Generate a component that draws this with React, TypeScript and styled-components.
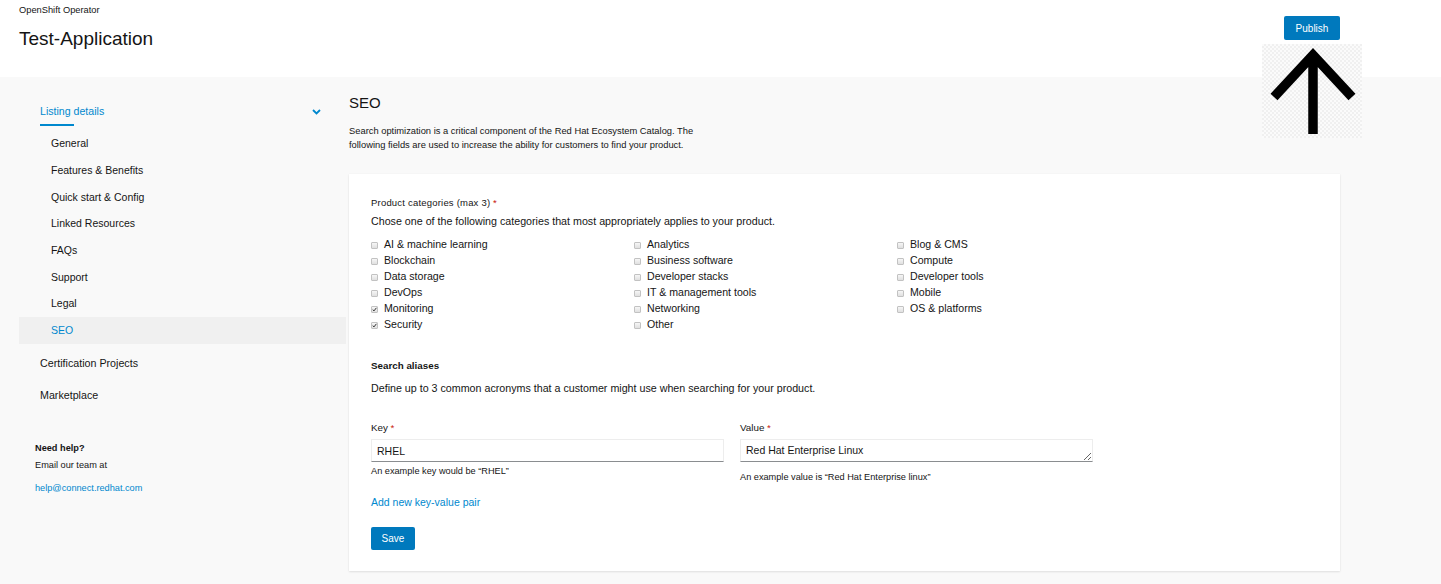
import React from 'react';
import styled, { createGlobalStyle } from 'styled-components';

const GlobalStyle = createGlobalStyle`
  html, body {
    margin: 0;
    padding: 0;
    background: #f9f9f9;
    font-family: "Liberation Sans", Arial, sans-serif;
    color: #151515;
  }
  * { box-sizing: border-box; }
`;

const BLUE = '#0079bd';
const LINK = '#0088ce';

const categories: { label: string; checked?: boolean }[][] = [
  [
    { label: 'AI & machine learning' },
    { label: 'Blockchain' },
    { label: 'Data storage' },
    { label: 'DevOps' },
    { label: 'Monitoring', checked: true },
    { label: 'Security', checked: true },
  ],
  [
    { label: 'Analytics' },
    { label: 'Business software' },
    { label: 'Developer stacks' },
    { label: 'IT & management tools' },
    { label: 'Networking' },
    { label: 'Other' },
  ],
  [
    { label: 'Blog & CMS' },
    { label: 'Compute' },
    { label: 'Developer tools' },
    { label: 'Mobile' },
    { label: 'OS & platforms' },
  ],
];

const subNav = [
  'General',
  'Features & Benefits',
  'Quick start & Config',
  'Linked Resources',
  'FAQs',
  'Support',
  'Legal',
  'SEO',
];

export default function App() {
  return (
    <>
      <GlobalStyle />
      <Page>
        <Header>
          <TitleBlock>
            <Overline>OpenShift Operator</Overline>
            <PageTitle>Test-Application</PageTitle>
          </TitleBlock>
          <Actions>
            <PrimaryButton>Publish</PrimaryButton>
            <ArrowImage>
              <svg width="100" height="94" viewBox="0 0 100 94">
                <path
                  d="M51 10 L51 90 M12 53 L51 11 L90 53"
                  stroke="#000"
                  strokeWidth="9.5"
                  fill="none"
                  strokeLinecap="butt"
                  strokeLinejoin="miter"
                />
              </svg>
            </ArrowImage>
          </Actions>
        </Header>
        <Body>
          <Sidebar>
            <NavGroup>
              <GroupHead>
                <GroupTitle>Listing details</GroupTitle>
                <svg width="9" height="6" viewBox="0 0 9 6">
                  <path d="M1 1 L4.5 4.5 L8 1" stroke={LINK} strokeWidth="1.8" fill="none" />
                </svg>
              </GroupHead>
              <SubList>
                {subNav.map((item) => (
                  <SubItem key={item} active={item === 'SEO'}>
                    {item}
                  </SubItem>
                ))}
              </SubList>
            </NavGroup>
            <TopItem>Certification Projects</TopItem>
            <TopItem>Marketplace</TopItem>
            <Help>
              <HelpTitle>Need help?</HelpTitle>
              <HelpText>Email our team at</HelpText>
              <HelpLink>help@connect.redhat.com</HelpLink>
            </Help>
          </Sidebar>
          <Main>
            <SectionTitle>SEO</SectionTitle>
            <Intro>
              Search optimization is a critical component of the Red Hat Ecosystem Catalog. The
              <br />
              following fields are used to increase the ability for customers to find your product.
            </Intro>
            <Card>
              <FieldLabel>
                Product categories (max 3) <Req>*</Req>
              </FieldLabel>
              <FieldDesc gap={4}>
                Chose one of the following categories that most appropriately applies to your product.
              </FieldDesc>
              <CheckGrid>
                {categories.map((col, i) => (
                  <CheckColumn key={i}>
                    {col.map((c) => (
                      <CheckRow key={c.label}>
                        <Box checked={c.checked}>
                          {c.checked && (
                            <svg width="5" height="5" viewBox="0 0 5 5">
                              <path d="M0.7 2.6 L2 3.9 L4.4 0.8" stroke="#333" strokeWidth="1" fill="none" />
                            </svg>
                          )}
                        </Box>
                        {c.label}
                      </CheckRow>
                    ))}
                  </CheckColumn>
                ))}
              </CheckGrid>

              <SubHeading>Search aliases</SubHeading>
              <FieldDesc gap={8}>
                Define up to 3 common acronyms that a customer might use when searching for your product.
              </FieldDesc>

              <PairRow>
                <Field>
                  <SmallLabel>
                    Key <Req>*</Req>
                  </SmallLabel>
                  <TextInput defaultValue="RHEL" />
                  <Helper>An example key would be “RHEL”</Helper>
                </Field>
                <Field>
                  <SmallLabel>
                    Value <Req>*</Req>
                  </SmallLabel>
                  <TextArea defaultValue="Red Hat Enterprise Linux" rows={1} />
                  <Helper offset={6}>An example value is “Red Hat Enterprise linux”</Helper>
                </Field>
              </PairRow>

              <AddLink>Add new key-value pair</AddLink>
              <SaveButton>Save</SaveButton>
            </Card>
          </Main>
        </Body>
      </Page>
    </>
  );
}

const Page = styled.div`
  min-height: 584px;
  background: #f9f9f9;
`;

const Header = styled.header`
  height: 77px;
  background: #fff;
  display: flex;
  justify-content: space-between;
  padding: 0 101px 0 19px;
  position: relative;
  z-index: 1;
`;

const TitleBlock = styled.div`
  display: flex;
  flex-direction: column;
  padding-top: 4px;
`;

const Overline = styled.div`
  font-size: 9.3px;
  line-height: 12px;
  color: #151515;
`;

const PageTitle = styled.h1`
  margin: 12px 0 0;
  font-size: 19px;
  line-height: 22px;
  font-weight: 400;
  color: #151515;
`;

const Actions = styled.div`
  position: relative;
  padding-top: 16px;
`;

const PrimaryButton = styled.button`
  height: 24px;
  width: 56px;
  padding: 0;
  border: none;
  border-radius: 2px;
  background: ${BLUE};
  color: #fff;
  font-family: inherit;
  font-size: 10px;
`;

const ArrowImage = styled.div`
  position: absolute;
  top: 44px;
  left: -22px;
  width: 100px;
  height: 94px;
  background-color: #fbfbfb;
  background-image: repeating-conic-gradient(#f0f0f0 0% 25%, #fbfbfb 0% 50%);
  background-size: 4px 4px;
  svg { display: block; }
`;

const Body = styled.div`
  display: flex;
  padding: 0 101px 13px 19px;
`;

const Sidebar = styled.aside`
  width: 327px;
  flex-shrink: 0;
  margin-right: 3px;
  padding-top: 25px;
`;

const NavGroup = styled.div`
  margin-bottom: 3px;
`;

const GroupHead = styled.div`
  display: flex;
  align-items: center;
  justify-content: space-between;
  padding: 0 25px 0 21px;
  height: 19px;
`;

const GroupTitle = styled.span`
  font-size: 10.6px;
  color: ${LINK};
  line-height: 19px;
  position: relative;
  &::after {
    content: '';
    position: absolute;
    left: 0;
    bottom: -5px;
    width: 34px;
    height: 2px;
    background: ${LINK};
  }
`;

const SubList = styled.div`
  margin-top: 9px;
`;

const SubItem = styled.div<{ active?: boolean }>`
  height: 26.7px;
  display: flex;
  align-items: center;
  padding-left: 32px;
  font-size: 10.5px;
  color: ${(p) => (p.active ? LINK : '#151515')};
  background: ${(p) => (p.active ? '#f0f0f0' : 'transparent')};
`;

const TopItem = styled.div`
  height: 32px;
  display: flex;
  align-items: center;
  padding-left: 21px;
  font-size: 10.7px;
  color: #151515;
`;

const Help = styled.div`
  margin-top: 30px;
  padding-left: 16px;
  font-size: 9.2px;
`;

const HelpTitle = styled.div`
  font-weight: 700;
  line-height: 14px;
  color: #151515;
`;

const HelpText = styled.div`
  line-height: 20px;
  color: #151515;
`;

const HelpLink = styled.div`
  margin-top: 6px;
  line-height: 14px;
  color: ${LINK};
`;

const Main = styled.main`
  flex: 1;
  padding-top: 17px;
`;

const SectionTitle = styled.h2`
  margin: 0;
  font-size: 15px;
  line-height: 18px;
  font-weight: 400;
  color: #151515;
`;

const Intro = styled.p`
  margin: 12px 0 0;
  font-size: 9.35px;
  line-height: 14px;
  color: #151515;
`;

const Card = styled.section`
  margin-top: 22px;
  background: #fff;
  box-shadow: 0 1px 2px rgba(3, 3, 3, 0.1), 0 0 1px rgba(3, 3, 3, 0.06);
  padding: 22px 22px 21px;
  min-height: 397px;
`;

const FieldLabel = styled.div`
  font-size: 9.5px;
  letter-spacing: 0.2px;
  line-height: 14px;
  color: #151515;
`;

const Req = styled.span`
  color: #c9190b;
`;

const FieldDesc = styled.div<{ gap: number }>`
  margin-top: ${(p) => p.gap}px;
  font-size: 10.7px;
  line-height: 14px;
  color: #151515;
`;

const CheckGrid = styled.div`
  margin-top: 8px;
  display: grid;
  grid-template-columns: 263px 263px 263px;
`;

const CheckColumn = styled.div`
  display: flex;
  flex-direction: column;
`;

const CheckRow = styled.label`
  height: 16px;
  display: flex;
  align-items: center;
  font-size: 10.6px;
  color: #151515;
`;

const Box = styled.span<{ checked?: boolean }>`
  width: 7px;
  height: 7px;
  margin: 2px 6px 0 0;
  border: 1px solid #c2c2c2;
  border-radius: 1px;
  background: linear-gradient(#f6f6f6, #e0e0e0);
  display: inline-flex;
  align-items: center;
  justify-content: center;
  flex-shrink: 0;
  svg { display: block; }
`;

const SubHeading = styled.div`
  margin-top: 27px;
  font-size: 9.8px;
  font-weight: 700;
  line-height: 14px;
  color: #151515;
`;

const PairRow = styled.div`
  margin-top: 26px;
  display: grid;
  grid-template-columns: 353px 353px;
  column-gap: 16px;
`;

const Field = styled.div`
  display: flex;
  flex-direction: column;
`;

const SmallLabel = styled.div`
  font-size: 9.8px;
  line-height: 14px;
  color: #151515;
`;

const TextInput = styled.input`
  margin-top: 4px;
  height: 23px;
  border: 1px solid #ededed;
  border-bottom-color: #8a8d90;
  padding: 0 5px;
  font-family: inherit;
  font-size: 10.5px;
  color: #151515;
  outline: none;
`;

const TextArea = styled.textarea`
  margin-top: 4px;
  height: 23px;
  border: 1px solid #ededed;
  border-bottom-color: #8a8d90;
  padding: 4px 5px;
  font-family: inherit;
  font-size: 10.5px;
  line-height: 13px;
  color: #151515;
  outline: none;
  resize: vertical;
  overflow: hidden;
`;

const Helper = styled.div<{ offset?: number }>`
  margin-top: ${(p) => 3 + (p.offset ?? 0)}px;
  font-size: 9.2px;
  line-height: 12px;
  color: #151515;
`;

const AddLink = styled.a`
  display: block;
  margin-top: 12px;
  font-size: 10.5px;
  line-height: 14px;
  color: ${LINK};
`;

const SaveButton = styled.button`
  display: block;
  margin-top: 18px;
  width: 44px;
  height: 23px;
  padding: 0;
  border: none;
  border-radius: 2px;
  background: ${BLUE};
  color: #fff;
  font-family: inherit;
  font-size: 10px;
`;
